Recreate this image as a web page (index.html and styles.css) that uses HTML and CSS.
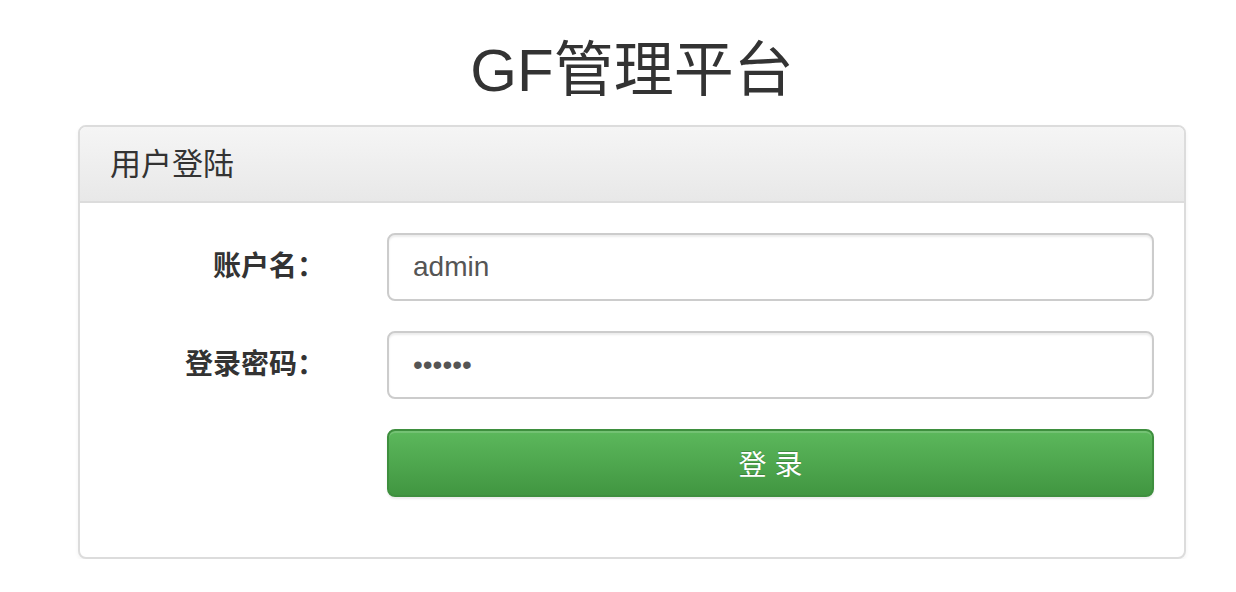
FILE: index.html
```html
<!DOCTYPE html>
<html lang="zh-CN">
<head>
<meta charset="utf-8">
<title>GF管理平台</title>
<link rel="stylesheet" href="styles.css">
</head>
<body>
<div class="page">
  <h1 class="title">GF管理平台</h1>
  <div class="panel">
    <div class="panel-heading">
      <h3 class="panel-title">用户登陆</h3>
    </div>
    <div class="panel-body">
      <form class="login-form">
        <div class="form-group">
          <label class="control-label">账户名：</label>
          <input class="form-control" type="text" value="admin">
        </div>
        <div class="form-group">
          <label class="control-label">登录密码：</label>
          <input class="form-control" type="password" value="123456">
        </div>
        <div class="form-group">
          <span></span>
          <button class="btn-success" type="button">登 录</button>
        </div>
      </form>
    </div>
  </div>
</div>
</body>
</html>
```

FILE: styles.css
```css
* { box-sizing: border-box; }
html, body {
  margin: 0;
  padding: 0;
  background: #fff;
}
body {
  font-family: "Liberation Sans", Arial, "Noto Sans CJK SC", sans-serif;
  color: #333;
  font-size: 28px;
}
.page {
  padding-left: 78px;
  width: 1186px;
}
.title {
  margin: 38px 0 21px;
  font-size: 60px;
  line-height: 66px;
  font-weight: 400;
  text-align: center;
  color: #333;
}
.panel {
  border: 2px solid #dcdcdc;
  border-radius: 8px;
  background: #fff;
  box-shadow: 0 2px 4px rgba(0,0,0,.05);
  overflow: hidden;
}
.panel-heading {
  height: 76px;
  padding: 2px 30px 0;
  display: flex;
  align-items: center;
  background: linear-gradient(to bottom, #f5f5f5 0, #e8e8e8 100%);
  border-bottom: 2px solid #dcdcdc;
}
.panel-title {
  margin: 0;
  font-size: 31px;
  font-weight: 400;
  color: #333;
  line-height: 1.1;
}
.panel-body {
  padding: 30px 30px 60px;
}
.login-form {
  display: flex;
  flex-direction: column;
  gap: 30px;
}
.form-group {
  display: grid;
  grid-template-columns: 215px 1fr;
  column-gap: 62px;
  align-items: center;
}
.control-label {
  text-align: right;
  font-weight: 700;
  font-size: 28px;
  line-height: 40px;
  color: #333;
}
.form-control {
  height: 68px;
  width: 100%;
  padding: 12px 24px;
  font-family: "Liberation Sans", Arial, sans-serif;
  font-size: 28px;
  color: #555;
  border: 2px solid #cccccc;
  border-radius: 8px;
  background: #fff;
  box-shadow: inset 0 2px 2px rgba(0,0,0,.075);
  outline: none;
}
.btn-success {
  height: 68px;
  width: 100%;
  font-family: "Liberation Sans", Arial, "Noto Sans CJK SC", sans-serif;
  font-size: 28px;
  color: #fff;
  border: 2px solid #3e8f3e;
  border-radius: 8px;
  background: linear-gradient(to bottom, #5cb85c 0, #419641 100%);
  box-shadow: inset 0 2px 0 rgba(255,255,255,.15), 0 2px 2px rgba(0,0,0,.075);
  text-shadow: 0 -1px 0 rgba(0,0,0,.2);
  cursor: pointer;
}
```
